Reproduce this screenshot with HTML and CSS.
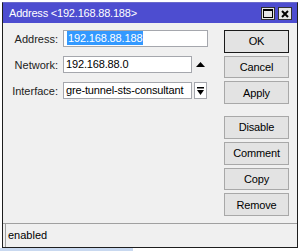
FILE: index.html
```html
<!DOCTYPE html>
<html lang="en">
<head>
    <meta charset="UTF-8">
    <title>Address</title>
    <link rel="stylesheet" href="styles.css">
</head>
<body>

    <div class="window">
        <!-- Title bar -->
        <div class="titlebar">
            <span class="title">Address &lt;192.168.88.188&gt;</span>
            <div class="title-buttons">
                <span class="tbtn">
                    <svg width="10" height="9" viewBox="0 0 10 9"><rect x="0.5" y="0.5" width="9" height="8" fill="none" stroke="#000"/><rect x="0" y="0" width="10" height="2" fill="#000"/></svg>
                </span>
                <span class="tbtn">
                    <svg width="8" height="8" viewBox="0 0 8 8"><path d="M1 1 L7 7 M7 1 L1 7" stroke="#000" stroke-width="2"/></svg>
                </span>
            </div>
        </div>

        <div class="body">
            <!-- Fields -->
            <div class="form">
                <div class="row">
                    <span class="label">Address:</span>
                    <div class="field wide"><span class="selected">192.168.88.188</span></div>
                </div>
                <div class="row">
                    <span class="label">Network:</span>
                    <div class="field">192.168.88.0</div>
                    <span class="side">
                        <svg width="9" height="5" viewBox="0 0 9 5"><path d="M0 5 L4.5 0 L9 5 Z" fill="#000"/></svg>
                    </span>
                </div>
                <div class="row">
                    <span class="label">Interface:</span>
                    <div class="field">gre-tunnel-sts-consultant</div>
                    <span class="drop">
                        <svg width="7" height="8" viewBox="0 0 7 8"><rect x="0" y="0" width="7" height="1.5" fill="#000"/><path d="M0 3 L7 3 L3.5 8 Z" fill="#000"/></svg>
                    </span>
                </div>
            </div>

            <!-- Action buttons -->
            <div class="actions">
                <button class="btn default">OK</button>
                <button class="btn">Cancel</button>
                <button class="btn">Apply</button>
                <div class="spacer"></div>
                <button class="btn">Disable</button>
                <button class="btn">Comment</button>
                <button class="btn">Copy</button>
                <button class="btn">Remove</button>
            </div>
        </div>

        <!-- Status bar -->
        <div class="status">
            <div class="status-field">enabled</div>
        </div>
    </div>

    <div class="below">
        <div class="below-left"></div>
    </div>

</body>
</html>
```

FILE: styles.css
```css
body {
    margin: 0;
    background-color: #ffffff;
    font-family: "Liberation Sans", Arial, sans-serif;
    font-size: 11px;
    color: #000;
}

.window {
    width: 294px;
    margin: 2px 0 0 2px;
    border: 1px solid #1e1e1e;
    border-top: 1px solid #6a6acc;
    background-color: #f0f0f0;
}

/* Title bar */
.titlebar {
    height: 20px;
    display: flex;
    align-items: center;
    justify-content: space-between;
    padding: 0 5px 0 6px;
    background-color: #4d4dd0;
}

.title {
    color: #fff;
    font-size: 11px;
    letter-spacing: -0.2px;
}

.title-buttons {
    display: flex;
    gap: 3px;
    padding-top: 1px;
}

.tbtn {
    width: 12px;
    height: 11px;
    border: 1px solid #333;
    background-color: #e6e6e6;
    display: flex;
    align-items: center;
    justify-content: center;
}

/* Body */
.body {
    display: flex;
    justify-content: space-between;
    padding: 7px 8px 7px 0;
    height: 186px;
}

.form {
    display: flex;
    flex-direction: column;
    gap: 9px;
}

.row {
    display: flex;
    align-items: center;
    height: 17px;
}

.label {
    width: 55px;
    text-align: right;
    padding-right: 5px;
    color: #222;
}

.field {
    width: 125px;
    height: 15px;
    line-height: 15px;
    padding-left: 2px;
    border: 1px solid #a5a7ad;
    background-color: #fff;
    white-space: nowrap;
    overflow: hidden;
    letter-spacing: -0.15px;
}

.field.wide {
    width: 140px;
    padding-left: 3px;
}

.selected {
    background-color: #3399ff;
    color: #fff;
    padding: 1px 1px;
}

.side {
    width: 16px;
    display: flex;
    justify-content: center;
    margin-left: 0;
}

.drop {
    width: 11px;
    height: 15px;
    margin-left: 2px;
    border: 1px solid #a5a7ad;
    background-color: #fff;
    display: flex;
    align-items: center;
    justify-content: center;
}

/* Buttons column */
.actions {
    display: flex;
    flex-direction: column;
    gap: 3px;
    width: 65px;
}

.btn {
    height: 23px;
    font-family: "Liberation Sans", Arial, sans-serif;
    font-size: 11px;
    letter-spacing: -0.15px;
    color: #000;
    background-color: #e3e3e3;
    border: 1px solid #a8a8a8;
    padding: 0;
}

.btn.default {
    border-color: #1a1a1a;
}

.spacer {
    height: 6px;
}

/* Status bar */
.status {
    border-top: 1px solid #a0a0a0;
    padding-left: 2px;
}

.status-field {
    height: 23px;
    line-height: 22px;
    padding-left: 2px;
    border-left: 1px solid #a0a0a0;
}

.below {
    height: 3px;
    background-color: #fff;
}

.below-left {
    width: 133px;
    height: 3px;
    background-color: #c9d9f0;
}
```
